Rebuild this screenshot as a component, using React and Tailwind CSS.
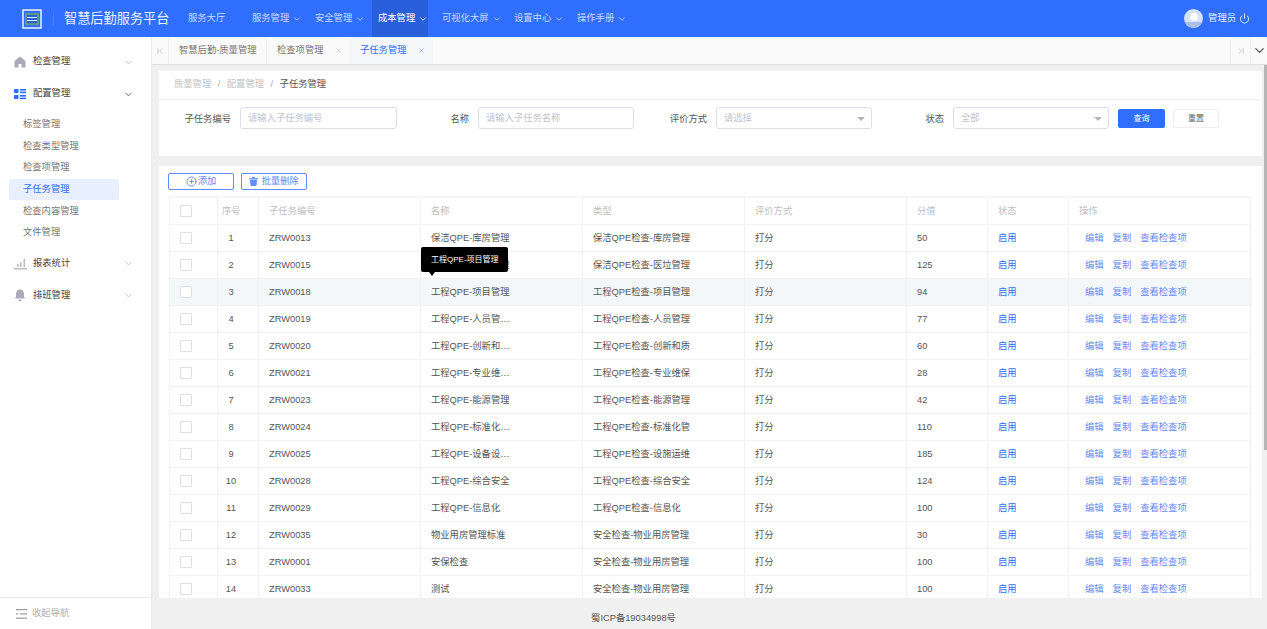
import { ChevronDown, ChevronFirst, ChevronLast, X, CirclePlus, Power } from "lucide-react";

const navItems = [
  { label: "服务大厅", w: "w-[64px]", plain: true },
  { label: "服务管理", w: "w-[63px]" },
  { label: "安全管理", w: "w-[57px]" },
  { label: "成本管理", w: "w-[56px] pl-[6px] mr-[14px]", active: true },
  { label: "可视化大屏", w: "w-[72px]" },
  { label: "设置中心", w: "w-[63px]" },
  { label: "操作手册", w: "w-[63px]" },
];

const subMenu = ["标签管理", "检查类型管理", "检查项管理", "子任务管理", "检查内容管理", "文件管理"];

const rows = [
  [1, "ZRW0013", "保洁QPE-库房管理", "保洁QPE检查-库房管理", 50],
  [2, "ZRW0015", "保洁QPE-医垃管理", "保洁QPE检查-医垃管理", 125],
  [3, "ZRW0018", "工程QPE-项目管理", "工程QPE检查-项目管理", 94],
  [4, "ZRW0019", "工程QPE-人员管…", "工程QPE检查-人员管理", 77],
  [5, "ZRW0020", "工程QPE-创新和…", "工程QPE检查-创新和质", 60],
  [6, "ZRW0021", "工程QPE-专业维…", "工程QPE检查-专业维保", 28],
  [7, "ZRW0023", "工程QPE-能源管理", "工程QPE检查-能源管理", 42],
  [8, "ZRW0024", "工程QPE-标准化…", "工程QPE检查-标准化管", 110],
  [9, "ZRW0025", "工程QPE-设备设…", "工程QPE检查-设施运维", 185],
  [10, "ZRW0028", "工程QPE-综合安全", "工程QPE检查-综合安全", 124],
  [11, "ZRW0029", "工程QPE-信息化", "工程QPE检查-信息化", 100],
  [12, "ZRW0035", "物业用房管理标准", "安全检查-物业用房管理", 30],
  [13, "ZRW0001", "安保检查", "安全检查-物业用房管理", 100],
  [14, "ZRW0033", "测试", "安全检查-物业用房管理", 100],
];

const gridCols = "grid grid-cols-[49px_41px_162px_162px_162px_162px_81px_81px_182px]";
const cell = "h-full flex items-center pt-[2px] pl-[10px] border-r border-[#f2f2f2]";
const checkCell = "h-full flex items-center pl-[10px] border-x border-[#f2f2f2]";

function Logo() {
  return (
    <svg width="20" height="20" viewBox="0 0 20 20" className="shrink-0">
      <rect x="1" y="1" width="18" height="18" fill="none" stroke="#e4ecff" strokeWidth="1.6" />
      <rect x="4" y="5" width="12" height="10" fill="#2a5fdc" stroke="#6fae5a" strokeWidth="1.4" />
      <path d="M5 8.500h10M5 11.500h10" stroke="#e6eeff" strokeWidth="1.2" />
    </svg>
  );
}

function HomeIcon() {
  return (
    <svg width="12" height="12" viewBox="0 0 12 12">
      <path d="M6 .5 11.500 5v6.500H7.500V8h-3v3.500H.5V5z" fill="#a9abb8" />
    </svg>
  );
}

function GridIcon() {
  return (
    <svg width="12" height="12" viewBox="0 0 12 12" fill="#2f6bff">
      <rect x="0" y="1" width="4.500" height="4" rx="0.800" />
      <rect x="0" y="7" width="4.500" height="4" rx="0.800" />
      <rect x="6" y="1" width="6" height="1.600" />
      <rect x="6" y="3.600" width="6" height="1.600" />
      <rect x="6" y="7" width="6" height="1.600" />
      <rect x="6" y="9.600" width="6" height="1.600" />
    </svg>
  );
}

function ChartIcon() {
  return (
    <svg width="13" height="12" viewBox="0 0 13 12" fill="#b9bbc6">
      <rect x="3" y="6" width="1.500" height="3" />
      <rect x="6" y="4" width="1.500" height="5" />
      <rect x="9.500" y="1" width="1.500" height="8" />
      <rect x="0" y="10" width="13" height="1.500" />
    </svg>
  );
}

function BellIcon() {
  return (
    <svg width="12" height="13" viewBox="0 0 12 13" fill="#a9abb8">
      <path d="M6 .5c2.600 0 4 2 4 4.500v3l1.500 1.500H.5L2 8V5C2 2.500 3.400.5 6 .5z" />
      <rect x="4.500" y="10.500" width="3" height="1.800" rx="0.900" />
    </svg>
  );
}

function CollapseIcon() {
  return (
    <svg width="11" height="10" viewBox="0 0 11 10" fill="#9a9a9a">
      <rect x="0" y="0" width="11" height="1.200" />
      <rect x="4" y="4.300" width="7" height="1.200" />
      <rect x="0" y="4.300" width="2" height="1.200" />
      <rect x="0" y="8.600" width="11" height="1.200" />
    </svg>
  );
}

function TrashIcon() {
  return (
    <svg width="9" height="9" viewBox="0 0 9 9" fill="#5f8dff" className="shrink-0">
      <rect x="3" y="0" width="3" height="1.200" />
      <rect x="0" y="1.200" width="9" height="1.300" rx="0.400" />
      <path d="M1 3h7l-.6 6H1.600z" />
    </svg>
  );
}

function Avatar() {
  return (
    <div className="w-[19px] h-[19px] rounded-full bg-[#d5e1fb] overflow-hidden flex flex-col items-center">
      <div className="w-[8px] h-[8px] rounded-full bg-white mt-[4px] shrink-0" />
      <div className="w-full h-[7px] bg-[#aebfe6] mt-[1px] shrink-0" />
    </div>
  );
}

function Caret() {
  return <div className="w-0 h-0 border-x-[4px] border-x-transparent border-t-[4px] border-t-[#b5b5b5]" />;
}

function Field({ label, labelW, width, placeholder, select }) {
  return (
    <div className="flex items-center">
      <div className={`${labelW} text-right text-[#555] mr-[9px] pt-[3px]`}>{label}</div>
      <div className={`${width} h-[22px] border border-[#dcdfe6] rounded-[3px] flex items-center justify-between pl-[7px] pr-[6px] pt-[1px] text-[#c0c4cc]`}>
        <span>{placeholder}</span>
        {select && <Caret />}
      </div>
    </div>
  );
}

function Check() {
  return <div className="w-[12px] h-[12px] border border-[#dcdfe6] rounded-[1px] bg-white" />;
}

function SideGroup({ icon, label, open }) {
  return (
    <div className="h-[32px] flex items-center pl-[14px] pr-[17px]">
      <div className="w-[19px] flex items-center">{icon}</div>
      <span className="text-[#444]">{label}</span>
      <ChevronDown size={11} className={`ml-auto ${open ? "text-[#666]" : "text-[#bbb]"}`} />
    </div>
  );
}

export default function App() {
  return (
    <div className="h-[629px] w-[1267px] overflow-hidden flex flex-col bg-[#f0f0f0] text-[9.3px] leading-none font-['Liberation_Sans','Noto_Sans_CJK_SC',sans-serif]">
      <header className="h-[37px] shrink-0 bg-[#2f6eff] flex items-center text-[#c9d9ff]">
        <div className="w-[64px] pl-[22px] flex items-center">
          <Logo />
          <div className="ml-[11px] w-px h-[14px] bg-[#4d82ff]" />
        </div>
        <div className="w-[124px] text-[13.200px] text-[#e8efff]">智慧后勤服务平台</div>
        {navItems.map((n) => (
          <div
            key={n.label}
            className={`${n.w} h-full flex items-center ${n.active ? "bg-[#2a5fdc] text-white" : ""}`}
          >
            <span className="whitespace-nowrap">{n.label}</span>
            {!n.plain && <ChevronDown size={10} className="ml-[3px] shrink-0" />}
          </div>
        ))}
        <div className="ml-auto flex items-center pr-[17px] text-[#e8efff]">
          <Avatar />
          <span className="ml-[5px]">管理员</span>
          <Power size={11} className="ml-[3px]" />
        </div>
      </header>

      <div className="flex-1 flex min-h-0">
        <aside className="w-[152px] shrink-0 bg-white flex flex-col border-r border-[#e8e8e8] pt-[9px]">
          <SideGroup icon={<HomeIcon />} label="检查管理" />
          <SideGroup icon={<GridIcon />} label="配置管理" open />
          <div className="flex flex-col px-[9px] pt-[4px] pb-[4.400px]">
            {subMenu.map((s) => (
              <div
                key={s}
                className={`h-[21.600px] flex items-center pl-[14px] rounded-[2px] ${s === "子任务管理" ? "bg-[#e8effe] text-[#2f6eff] w-[110px]" : "text-[#777]"}`}
              >
                {s}
              </div>
            ))}
          </div>
          <SideGroup icon={<ChartIcon />} label="报表统计" />
          <SideGroup icon={<BellIcon />} label="排班管理" />
          <div className="mt-auto h-[32px] border-t border-[#e6e6e6] flex items-center pl-[16px] text-[#b0b0b0]">
            <CollapseIcon />
            <span className="ml-[5px]">收起导航</span>
          </div>
        </aside>

        <main className="flex-1 min-w-0 flex flex-col">
          <div className="h-[28px] shrink-0 bg-[#fafafa] border-b border-[#e0e0e0] flex items-center">
            <div className="w-[16px] h-full flex items-center justify-center text-[#c4c4c4]"><ChevronFirst size={10} /></div>
            <div className="w-[99px] h-full bg-[#fafafa] border-x border-[#f0f0f0] flex items-center pl-[10px] text-[#777]">智慧后勤-质量管理</div>
            <div className="w-[82px] h-full flex items-center pl-[10px] text-[#777]">
              检查项管理
              <X size={7} className="ml-[11px] text-[#bbb]" />
            </div>
            <div className="w-[84px] h-full bg-[#f5f6f7] flex items-center pl-[11px] text-[#2f6eff]">
              子任务管理
              <X size={7} className="ml-[11px] text-[#6f9bff]" />
            </div>
            <div className="ml-auto w-[20px] h-full border-l border-[#f0f0f0] flex items-center justify-center text-[#c4c4c4]"><ChevronLast size={10} /></div>
            <div className="w-[17px] h-full border-l border-[#f0f0f0] flex items-center justify-center text-[#555]"><ChevronDown size={15} /></div>
          </div>

          <div className="flex-1 min-h-0 flex">
            <div className="flex-1 min-w-0 overflow-hidden flex flex-col pl-[7px] pr-[1px] pt-[6px]">
              <section className="h-[85px] shrink-0 bg-white">
                <div className="h-[29px] border-b border-[#f0f0f0] flex items-center pl-[15px] text-[#c2c2c2]">
                  质量管理<span className="mx-[6.500px] text-[#aaa]">/</span>配置管理<span className="mx-[6.500px] text-[#aaa]">/</span>
                  <span className="text-[#555]">子任务管理</span>
                </div>
                <div className="flex items-start pt-[7px]">
                  <Field label="子任务编号" labelW="w-[72px]" width="w-[157px]" placeholder="请输入子任务编号" />
                  <Field label="名称" labelW="w-[72px]" width="w-[156px]" placeholder="请输入子任务名称" />
                  <Field label="评价方式" labelW="w-[73px]" width="w-[156px]" placeholder="请选择" select />
                  <Field label="状态" labelW="w-[72px]" width="w-[156px]" placeholder="全部" select />
                  <button className="ml-[9px] mt-[2px] w-[47px] h-[19px] rounded-[2px] bg-[#2f6eff] text-white text-[8px]">查询</button>
                  <button className="ml-[8px] mt-[2px] w-[46px] h-[19px] rounded-[2px] border border-[#eceef2] text-[#666] text-[8px]">重置</button>
                </div>
              </section>

              <section className="mt-[10px] flex-1 min-h-0 bg-white px-[10px] pt-[7px]">
                <div className="flex items-center gap-[6px] h-[17px] -ml-[1px]">
                  <button className="w-[66px] h-[17px] border border-[#5f8dff] rounded-[2px] text-[#5f8dff] flex items-center justify-center">
                    <CirclePlus size={11} />
                    <span className="ml-[1px]">添加</span>
                  </button>
                  <button className="ml-[1px] w-[66px] h-[17px] border border-[#5f8dff] rounded-[2px] text-[#5f8dff] flex items-center justify-center">
                    <TrashIcon />
                    <span className="ml-[3px]">批量删除</span>
                  </button>
                </div>

                <div className="relative mt-[6px] border-t-2 border-[#f5f5f5]">
                  <div className={`${gridCols} h-[27px] items-center text-[#bdbdbd] border-b border-[#f2f2f2]`}>
                    <div className={checkCell}><Check /></div>
                    <div className={`${cell} !pl-[4px]`}>序号</div>
                    <div className={cell}>子任务编号</div>
                    <div className={cell}>名称</div>
                    <div className={cell}>类型</div>
                    <div className={cell}>评价方式</div>
                    <div className={cell}>分值</div>
                    <div className={cell}>状态</div>
                    <div className={cell}>操作</div>
                  </div>

                  {rows.map(([no, code, name, type, score]) => (
                    <div
                      key={no}
                      className={`${gridCols} h-[27px] items-center text-[#555] border-b border-[#f2f2f2] ${no === 3 ? "bg-[#f4f7fa]" : ""}`}
                    >
                      <div className={checkCell}><Check /></div>
                      <div className={`${cell} !pl-0`}><span className="w-[26px] text-center">{no}</span></div>
                      <div className={cell}>{code}</div>
                      <div className={cell}>{name}</div>
                      <div className={cell}>{type}</div>
                      <div className={cell}>打分</div>
                      <div className={cell}>{score}</div>
                      <div className={`${cell} text-[#2f6eff]`}>启用</div>
                      <div className={`${cell} !pl-[16px] text-[#5f8dff]`}>
                        <span>编辑</span>
                        <span className="ml-[9px]">复制</span>
                        <span className="ml-[9px]">查看检查项</span>
                      </div>
                    </div>
                  ))}

                  {/* tooltip on row 3 */}
                  <div className="absolute left-[252px] top-[49px] w-[87px] h-[25px] bg-black rounded-[2px] text-white text-[8px] whitespace-nowrap flex items-center pl-[10px]">
                    工程QPE-项目管理
                    <div className="absolute left-[8px] top-[25px] w-0 h-0 border-x-[3px] border-x-transparent border-t-[4px] border-t-black" />
                  </div>
                </div>
              </section>
            </div>
            {/* page scrollbar */}
            <div className="w-[4px] shrink-0 bg-[#f0f0f0]">
              <div className="w-[3px] ml-[1px] h-[385px] bg-[#b5b5b5]" />
            </div>
          </div>

          <footer className="h-[31px] shrink-0 flex items-center justify-center pr-[152px] pt-[10px] text-[#555]">蜀ICP备19034998号</footer>
        </main>
      </div>
    </div>
  );
}
